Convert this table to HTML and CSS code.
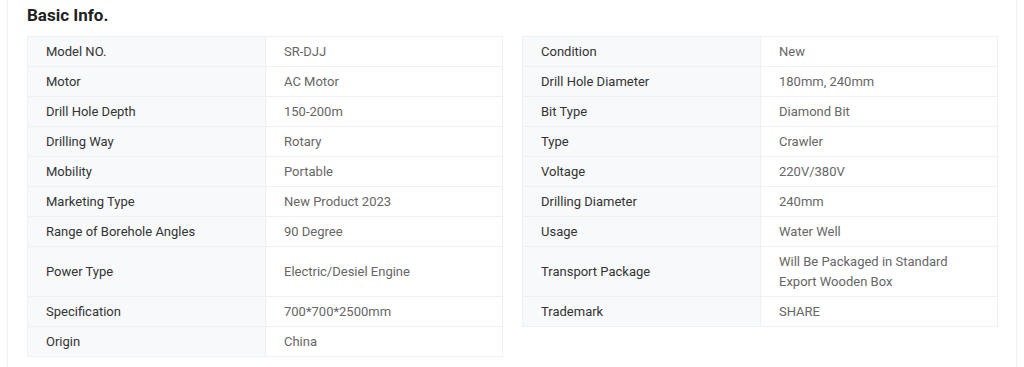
FILE: index.html
```
<!DOCTYPE html>
<html>
<head>
<meta charset="utf-8">
<link rel="stylesheet" href="styles.css">
</head>
<body>
<div class="card">
  <h2 class="title">Basic Info.</h2>
  <div class="tables">
    <table class="info">
      <colgroup><col class="kc"><col class="vc"></colgroup>
      <tr><td class="k">Model NO.</td><td class="v">SR-DJJ</td></tr>
      <tr><td class="k">Motor</td><td class="v">AC Motor</td></tr>
      <tr><td class="k">Drill Hole Depth</td><td class="v">150-200m</td></tr>
      <tr><td class="k">Drilling Way</td><td class="v">Rotary</td></tr>
      <tr><td class="k">Mobility</td><td class="v">Portable</td></tr>
      <tr><td class="k">Marketing Type</td><td class="v">New Product 2023</td></tr>
      <tr><td class="k">Range of Borehole Angles</td><td class="v">90 Degree</td></tr>
      <tr class="tall"><td class="k">Power Type</td><td class="v">Electric/Desiel Engine</td></tr>
      <tr><td class="k">Specification</td><td class="v">700*700*2500mm</td></tr>
      <tr><td class="k">Origin</td><td class="v">China</td></tr>
    </table>
    <table class="info">
      <colgroup><col class="kc"><col class="vc"></colgroup>
      <tr><td class="k">Condition</td><td class="v">New</td></tr>
      <tr><td class="k">Drill Hole Diameter</td><td class="v">180mm, 240mm</td></tr>
      <tr><td class="k">Bit Type</td><td class="v">Diamond Bit</td></tr>
      <tr><td class="k">Type</td><td class="v">Crawler</td></tr>
      <tr><td class="k">Voltage</td><td class="v">220V/380V</td></tr>
      <tr><td class="k">Drilling Diameter</td><td class="v">240mm</td></tr>
      <tr><td class="k">Usage</td><td class="v">Water Well</td></tr>
      <tr><td class="k">Transport Package</td><td class="v">Will Be Packaged in Standard Export Wooden Box</td></tr>
      <tr><td class="k">Trademark</td><td class="v">SHARE</td></tr>
    </table>
  </div>
</div>
</body>
</html>
```
FILE: styles.css
```
html, body {
  margin: 0;
  padding: 0;
  background: #fff;
}
body {
  font-family: Roboto, "Liberation Sans", sans-serif;
}
.card {
  margin-left: 7px;
  width: 1010px;
  box-sizing: border-box;
  min-height: 367px;
  border-left: 1px solid #eef0f4;
  border-right: 1px solid #eef0f4;
  padding: 5px 0 0 19px;
}
.title {
  margin: 0 0 10px 0;
  font-size: 17px;
  line-height: 21px;
  font-weight: 700;
  color: #222;
}
.tables {
  display: flex;
  align-items: flex-start;
  gap: 19px;
}
.info {
  width: 475px;
  border-collapse: collapse;
  table-layout: fixed;
  font-size: 13px;
  line-height: 20px;
}
.kc {
  width: 238px;
}
.vc {
  width: 237px;
}
.info td {
  border: 1px solid #edf0f5;
  padding: 4.5px 18px;
  vertical-align: middle;
}
.info .k {
  background: #f8f9fb;
  color: #333;
}
.info .v {
  color: #666;
}
.info .tall td {
  padding-top: 14.5px;
  padding-bottom: 14.5px;
}
```
